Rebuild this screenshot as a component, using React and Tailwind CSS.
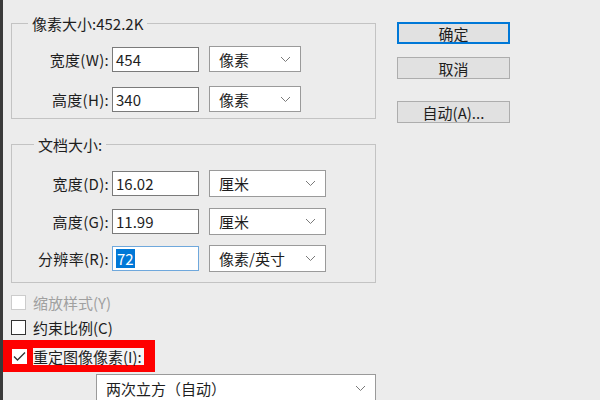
import React from "react";

const Chevron = () => (
	<svg width="11" height="7" viewBox="0 0 11 7" className="shrink-0">
		<path d="M1 1 L5.5 5.5 L10 1" fill="none" stroke="#7a7a7a" strokeWidth="1" />
	</svg>
);

const Select = ({ value, width, height = "h-[26px]" }) => (
	<div
		className={`flex items-center justify-between bg-white border border-[#9a9a9a] pl-[9px] pr-[9px] ${width} ${height}`}>
		<span className="leading-none">{value}</span>
		<Chevron />
	</div>
);

const Field = ({ label, value, selected }) => (
	<div className="flex items-center">
		<span className="w-[97px] text-right leading-none tracking-[0.3px]">{label}</span>
		<div
			className={`ml-[3px] w-[87px] h-[25px] bg-white flex items-center pl-[3px] border ${
				selected ? "border-[#6fa8dc]" : "border-[#7a7a7a]"
			}`}>
			{selected ? (
				<span className="bg-[#0078d7] text-white leading-[19px] px-[1px]">{value}</span>
			) : (
				<span className="leading-none">{value}</span>
			)}
		</div>
	</div>
);

// group box: title row with the border line running through its middle
const Group = ({ title, titleOffset, className, bodyClass, children }) => (
	<div className={`flex flex-col ${className}`}>
		<div className="flex items-center h-[20px]">
			<div className={`self-end h-[10px] border-l border-t border-[#c3c3c3] ${titleOffset}`} />
			<span className="px-[4px] leading-none">{title}</span>
			<div className="self-end flex-1 h-[10px] border-r border-t border-[#c3c3c3]" />
		</div>
		<div className={`border-x border-b border-[#c3c3c3] flex flex-col ${bodyClass}`}>{children}</div>
	</div>
);

const Button = ({ children, primary }) => (
	<div
		className={`w-[113px] h-[22px] flex items-center justify-center bg-[#e1e1e1] leading-none ${
			primary ? "border-2 border-[#0078d7]" : "border border-[#adadad]"
		}`}>
		{children}
	</div>
);

const CheckBox = ({ checked, disabled }) => (
	<div
		className={`w-[15px] h-[15px] bg-white flex items-center justify-center border ${
			disabled ? "border-[#cccccc]" : checked ? "border-white" : "border-[#333333]"
		}`}>
		{checked && (
			<svg width="13" height="11" viewBox="0 0 13 11">
				<path d="M1 5.5 L4.5 9 L12 1.5" fill="none" stroke="#333333" strokeWidth="1.3" />
			</svg>
		)}
	</div>
);

export default function App() {
	return (
		<div className="w-[600px] h-[400px] overflow-hidden bg-[#ececec] flex text-[15px] text-[#1e1e1e] font-['Noto_Sans_CJK_SC','Microsoft_YaHei',sans-serif]">
			<div className="w-[3px] h-full bg-[#3a3a3a]" />
			<div className="flex-1 flex flex-col">
				<div className="w-[514px] h-[3px] bg-white" />
				<div className="flex">
					{/* left column */}
					<div className="ml-[8px] w-[365px] flex flex-col">
						<Group
							title="像素大小:452.2K"
							titleOffset="w-[17px]"
							className="mt-[13px]"
							bodyClass="pt-[13px] pb-[6px]">
							<div className="flex items-center gap-[10px]">
								<Field label="宽度(W):" value="454" />
								<Select value="像素" width="w-[92px]" />
							</div>
							<div className="mt-[14px] flex items-center gap-[10px]">
								<Field label="高度(H):" value="340" />
								<Select value="像素" width="w-[92px]" />
							</div>
						</Group>

						<Group
							title="文档大小:"
							titleOffset="w-[23px]"
							className="mt-[15px]"
							bodyClass="pt-[16px] pb-[10px]">
							<div className="flex items-center gap-[10px]">
								<Field label="宽度(D):" value="16.02" />
								<Select value="厘米" width="w-[117px]" height="h-[27px]" />
							</div>
							<div className="mt-[11px] flex items-center gap-[10px]">
								<Field label="高度(G):" value="11.99" />
								<Select value="厘米" width="w-[117px]" height="h-[27px]" />
							</div>
							<div className="mt-[10px] flex items-center gap-[10px]">
								<Field label="分辨率(R):" value="72" selected />
								<Select value="像素/英寸" width="w-[117px]" height="h-[27px]" />
							</div>
						</Group>

						<div className="mt-[9px] h-[20px] flex items-center gap-[7px]">
							<CheckBox disabled />
							<span className="text-[#a0a0a0] leading-none">缩放样式(Y)</span>
						</div>
						<div className="mt-[5px] h-[20px] flex items-center gap-[7px]">
							<CheckBox />
							<span className="leading-none">约束比例(C)</span>
						</div>
						<div className="mt-[3px] -ml-[8px] w-[152px] h-[32px] bg-[#ff0000] flex items-center pl-[9px] gap-[6px]">
							<CheckBox checked />
							<span className="bg-[#f4f4f4] leading-[17px] pr-[2px]">重定图像像素(I):</span>
						</div>
						<div className="mt-[2px] ml-[85px]">
							<Select value="两次立方（自动）" width="w-[280px]" height="h-[28px]" />
						</div>
					</div>

					{/* right column */}
					<div className="ml-[21px] mt-[22px] flex flex-col">
						<Button primary>确定</Button>
						<div className="mt-[13px]">
							<Button>取消</Button>
						</div>
						<div className="mt-[22px]">
							<Button>自动(A)...</Button>
						</div>
					</div>
				</div>
			</div>
		</div>
	);
}
